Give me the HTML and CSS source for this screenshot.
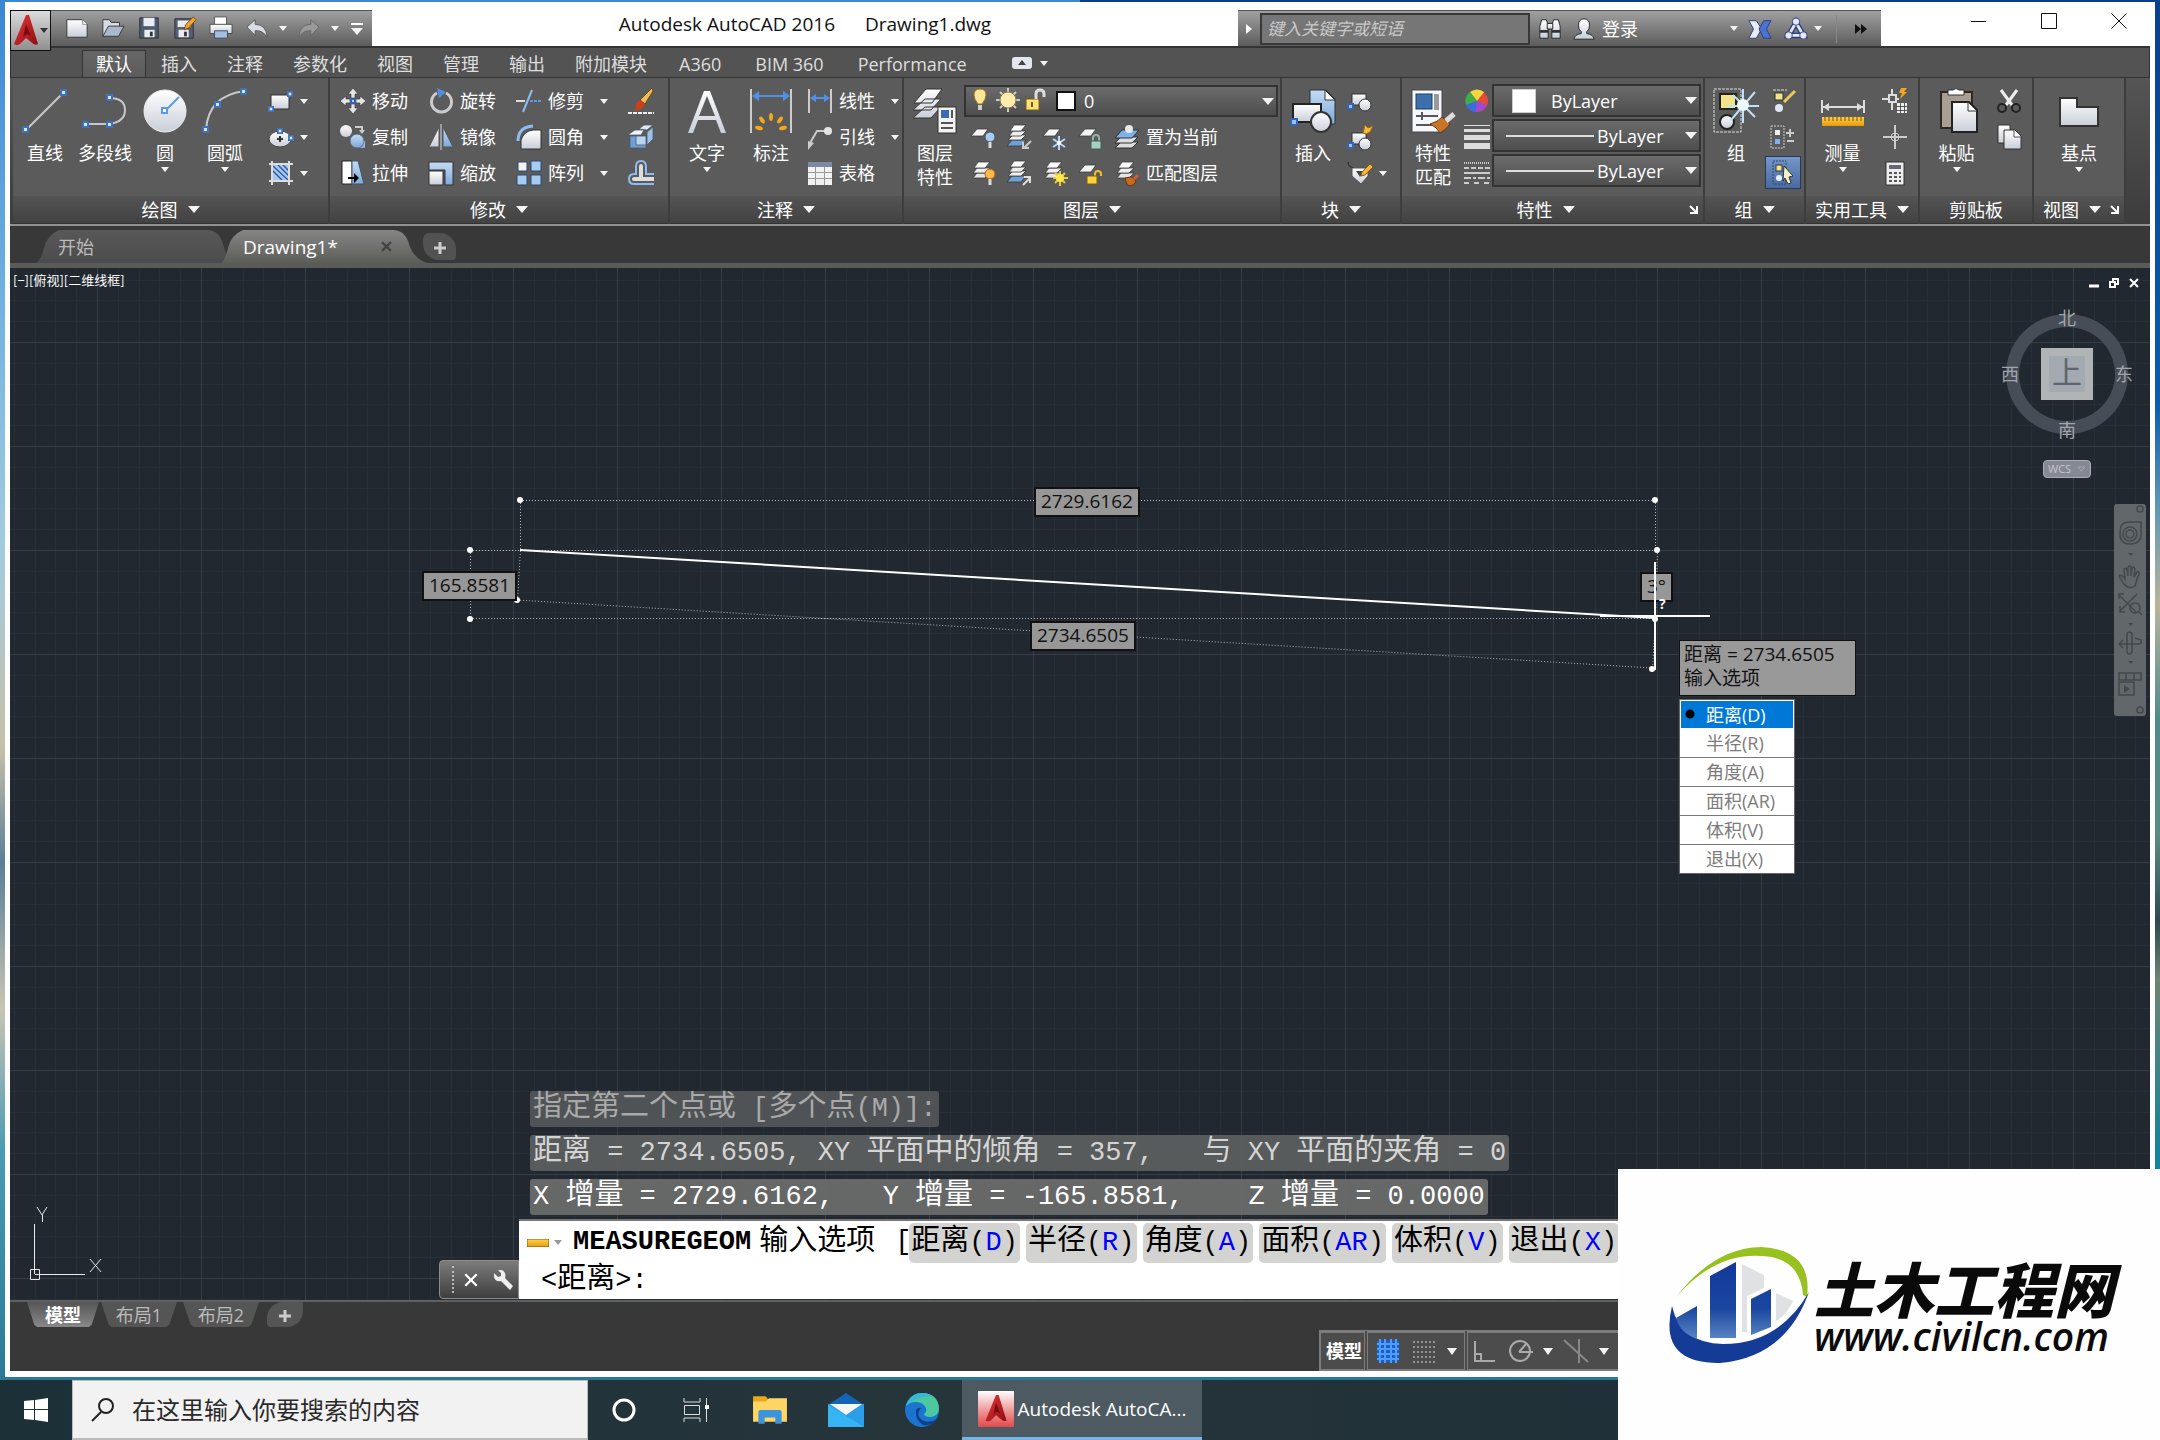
FILE: index.html
```html
<!DOCTYPE html>
<html lang="zh-CN">
<head>
<meta charset="utf-8">
<title>Autodesk AutoCAD 2016 - Drawing1.dwg</title>
<link rel="stylesheet" href="styles.css">
</head>
<body>

<!-- shared gradients and symbols -->
<svg class="defs" aria-hidden="true">
  <defs>
    <linearGradient id="gWhite" x1="0" y1="0" x2="0" y2="1"><stop offset="0" stop-color="#fff"/><stop offset="1" stop-color="#c9ced8"/></linearGradient>
    <linearGradient id="gBlue" x1="0" y1="0" x2="0" y2="1"><stop offset="0" stop-color="#c3dcf5"/><stop offset="1" stop-color="#7ea9d8"/></linearGradient>
    <linearGradient id="gRed" x1="0" y1="0" x2="1" y2="1"><stop offset="0" stop-color="#e8383c"/><stop offset="1" stop-color="#8c0d10"/></linearGradient>
    <linearGradient id="gTower" x1="0" y1="0" x2="0" y2="1"><stop offset="0" stop-color="#12389a"/><stop offset="0.6" stop-color="#1a46a0"/><stop offset="1" stop-color="#5b86c4"/></linearGradient>
    <linearGradient id="gGold" x1="0" y1="0" x2="0" y2="1"><stop offset="0" stop-color="#ffd24a"/><stop offset="1" stop-color="#e79a0c"/></linearGradient>
    <symbol id="stack" viewBox="0 0 26 26">
      <g stroke="#3a3a3a" stroke-width="0.8"><path fill="#e6e6e6" d="M3 18l4-5h13l-5 5z"/><path fill="#eee" d="M3 13l4-5h13l-5 5z"/><path fill="#fff" d="M4 8l4-6h12l-5 6z"/></g>
    </symbol>
    <symbol id="stackBlue" viewBox="0 0 26 26">
      <g stroke="#3a3a3a" stroke-width="0.8"><path fill="#6ea0d8" d="M1 22l5-6h14l-5 6z"/><path fill="#eee" d="M2 16l5-5h13l-5 5z"/><path fill="#eee" d="M3 12l4-5h13l-5 5z"/><path fill="#fff" d="M4 7l4-6h12l-5 6z"/></g>
    </symbol>
    <symbol id="sheet" viewBox="0 0 26 26"><path fill="#f4f4f4" stroke="#3a3a3a" stroke-width="0.8" d="M1 12l6-7h11l-5 7z"/></symbol>
    <symbol id="grip" viewBox="0 0 7 7"><rect x="1" y="1" width="5" height="5" fill="#d6e6f8" stroke="#3f72bd" stroke-width="2"/></symbol>
    <symbol id="logoA" viewBox="0 0 26 32"><path fill="url(#gRed)" d="M13 0L1 29q4 3 8-2l4-4 5 4q4 4 7 2L16 0z"/><path fill="#7d0b0e" d="M13 9l-3 13 4-3 4 2z"/></symbol>
    <symbol id="block" viewBox="0 0 26 26"><rect x="5" y="6" width="14" height="11" fill="url(#gWhite)" stroke="#333"/><circle cx="18" cy="17" r="6" fill="url(#gWhite)" stroke="#333"/><rect x="1" y="16" width="5" height="5" fill="#9cc0ee" stroke="#3465ae" stroke-width="2"/></symbol>
  </defs>
</svg>

<main class="window">
  <header class="titlebar">
    <button class="app-menu" aria-label="应用程序菜单"><svg width="26" height="32"><use href="#logoA"/></svg><i class="arrow dark"></i></button>
    <nav class="qat">
      <button aria-label="新建"><svg viewBox="0 0 26 26"><path fill="url(#gWhite)" stroke="#333" d="M2 4h17l5 5v14H2z"/><path fill="#fff" stroke="#888" d="M19 4v5h5"/></svg></button>
      <button aria-label="打开"><svg viewBox="0 0 26 26"><path fill="#d7dde6" stroke="#333" d="M2 22V4h7l2 3h9v4"/><path fill="#a9b8cc" stroke="#333" d="M2 22l6-11h17l-6 11z"/></svg></button>
      <button aria-label="保存"><svg viewBox="0 0 26 26"><path fill="#4f5b6e" stroke="#2b2f36" d="M3 2h20v22H3z"/><path fill="#e9edf3" d="M7 2h12v9H7z"/><path fill="#e9edf3" d="M8 15h11v8H8z"/><path fill="#333" d="M14 17h3v5h-3z"/></svg></button>
      <button aria-label="另存为"><svg viewBox="0 0 26 26"><path fill="#555f70" stroke="#2b2f36" d="M2 3h20v21H2z"/><path fill="#e9edf3" d="M5 5h14v7H5zM6 15h11v8H6z"/><path fill="#333" d="M12 17h3v5h-3z"/><path fill="#f0a52c" stroke="#7a4a10" d="M12 15l2-6 8-8 3 3-8 9z"/></svg></button>
      <button aria-label="打印"><svg viewBox="0 0 26 26"><path fill="#fff" stroke="#555" d="M6 1h13v9H6z"/><path fill="url(#gWhite)" stroke="#444" d="M1 9h24v10H1z"/><path fill="#9fc0e4" stroke="#445" d="M6 16h14v8H6z"/></svg></button>
      <button aria-label="放弃"><svg viewBox="0 0 26 26"><path fill="#d9dde3" stroke="#555" d="M2 12l9-8v5q12 0 13 14-5-8-13-7v5z"/></svg></button>
      <button class="drop" aria-label="放弃列表"><i class="arrow"></i></button>
      <button aria-label="重做"><svg viewBox="0 0 26 26"><path fill="#9a9a9a" stroke="#666" d="M24 12l-9-8v5Q3 9 2 23q5-8 13-7v5z"/></svg></button>
      <button class="drop" aria-label="重做列表"><i class="arrow"></i></button>
      <button class="drop" aria-label="自定义快速访问工具栏"><i class="bar"></i><i class="arrow lg"></i></button>
    </nav>
    <h1 class="title"><span>Autodesk AutoCAD 2016</span><span>Drawing1.dwg</span></h1>
    <div class="infocenter">
      <button class="expand" aria-label="展开"><i class="arrow right"></i></button>
      <input type="text" class="keyword" placeholder="键入关键字或短语" aria-label="键入关键字或短语">
      <button class="ic" aria-label="搜索"><svg viewBox="0 0 26 26"><g fill="url(#gWhite)" stroke="#222"><path d="M4 3h5l2 6v14H2V10zM22 3h-5l-2 6v14h9V10z"/><path d="M10 7h6v6h-6z"/></g><path fill="#333" d="M2 14h9v3H2zM15 14h9v3h-9z"/></svg></button>
      <button class="login"><svg viewBox="0 0 26 26"><path fill="url(#gWhite)" stroke="#222" d="M13 2q6 0 6 7 0 5-3 7v2q7 1 8 6H2q1-5 8-6v-2q-3-2-3-7 0-7 6-7z"/></svg>登录<i class="arrow"></i></button>
      <button class="ic" aria-label="Exchange"><svg viewBox="0 0 26 26"><path fill="#e8ecf8" stroke="#2c3c80" d="M1 4h8l4 6v6l-4 7H1l5-10z"/><path fill="#4b74d2" stroke="#2c3c80" d="M25 4h-8l-5 9 5 10h8l-5-10z"/></svg></button>
      <button class="ic share" aria-label="Autodesk 360"><svg viewBox="0 0 26 26"><path fill="none" stroke="#2c3c80" stroke-width="6" d="M13 6L5 20h16z"/><path fill="none" stroke="#e4e9f4" stroke-width="3" d="M13 6L5 20h16z"/><g fill="#e4e9f4" stroke="#2c3c80"><circle cx="13" cy="5" r="4"/><circle cx="5" cy="20" r="4"/><circle cx="21" cy="20" r="4"/></g></svg><i class="arrow"></i></button>
      <button class="more" aria-label="更多"><i class="arrow right black"></i><i class="arrow right black"></i></button>
    </div>
    <div class="winctl">
      <button aria-label="最小化"><svg viewBox="0 0 16 16"><path d="M0 8.500h15"/></svg></button>
      <button aria-label="最大化"><svg viewBox="0 0 16 16"><path d="M.5.5h15v15H.5z"/></svg></button>
      <button aria-label="关闭"><svg viewBox="0 0 16 16"><path d="M.5.5l15 15M15.500.5l-15 15"/></svg></button>
    </div>
  </header>

  <nav class="tabs">
    <button class="tab active">默认</button>
    <button class="tab">插入</button>
    <button class="tab">注释</button>
    <button class="tab">参数化</button>
    <button class="tab">视图</button>
    <button class="tab">管理</button>
    <button class="tab">输出</button>
    <button class="tab">附加模块</button>
    <button class="tab addon">A360</button>
    <button class="tab addon">BIM 360</button>
    <button class="tab addon">Performance</button>
    <button class="collapse" aria-label="最小化功能区"><svg width="20" height="12" viewBox="0 0 20 12"><rect width="20" height="12" rx="3" fill="#e4e8ee"/><path fill="#444" d="M6 8l4-5 4 5z"/></svg><i class="arrow"></i></button>
  </nav>

  <section class="ribbon">
    <div class="panel draw">
      <div class="body">
        <button class="big"><svg viewBox="0 0 46 46"><path stroke="#c8c8c8" stroke-width="2" d="M4 42L42 4"/><use href="#grip" x="0" y="38" width="7" height="7"/><use href="#grip" x="38" y="1" width="7" height="7"/></svg>直线</button>
        <button class="big"><svg viewBox="0 0 46 46"><path fill="none" stroke="#c8c8c8" stroke-width="2" d="M3 36h24q16-2 16-14T27 10"/><use href="#grip" x="0" y="33" width="7" height="7"/><use href="#grip" x="24" y="33" width="7" height="7"/><use href="#grip" x="24" y="6" width="7" height="7"/></svg>多段线</button>
        <button class="big"><svg viewBox="0 0 46 46"><circle cx="23" cy="23" r="21" fill="url(#gWhite)" stroke="#eee"/><path stroke="#5a9be6" stroke-width="2" d="M23 23L37 9"/><rect x="20" y="20" width="5" height="5" fill="#fff" stroke="#5a9be6" stroke-width="2"/></svg>圆<i class="arrow"></i></button>
        <button class="big"><svg viewBox="0 0 46 46"><path fill="none" stroke="#c8c8c8" stroke-width="2" d="M4 42Q6 8 42 3"/><use href="#grip" x="0" y="38" width="7" height="7"/><use href="#grip" x="12" y="13" width="7" height="7"/><use href="#grip" x="38" y="0" width="7" height="7"/></svg>圆弧<i class="arrow"></i></button>
        <div class="tools">
          <button class="tool" aria-label="矩形"><svg viewBox="0 0 26 26"><rect x="3" y="7" width="18" height="14" fill="url(#gWhite)" stroke="#333"/><use href="#grip" x="0" y="18" width="6" height="6"/><use href="#grip" x="19" y="3" width="6" height="6"/></svg><i class="arrow"></i></button>
          <button class="tool" aria-label="椭圆"><svg viewBox="0 0 26 26"><ellipse cx="12" cy="15" rx="11" ry="8" fill="url(#gWhite)" stroke="#444"/><path stroke="#333" stroke-width="2" d="M12 12v6M9 15h6"/><use href="#grip" x="9" y="4" width="6" height="6"/><use href="#grip" x="20" y="11" width="6" height="6"/></svg><i class="arrow"></i></button>
          <button class="tool" aria-label="图案填充"><svg viewBox="0 0 26 26"><rect x="4" y="5" width="17" height="16" fill="#a8c8ec"/><path stroke="#2f60ac" stroke-width="1.500" d="M5 6l15 14M10 5l11 11M5 11l10 10M15 5l6 6"/><path stroke="#ddd" stroke-width="2" d="M4 1v24M21 1v24M1 4h24M1 21h24"/></svg><i class="arrow"></i></button>
        </div>
      </div>
      <button class="caption">绘图<i class="arrow lg"></i></button>
    </div>

    <div class="panel modify">
      <div class="body">
        <div class="tools">
          <button class="tool"><svg viewBox="0 0 26 26"><g fill="#e4e4e4" stroke="#333" stroke-width="0.6"><path d="M13 0l5 6h-3v4h-4V6H8zM13 26l-5-6h3v-4h4v4h3zM0 13l6-5v3h4v4H6v3zM26 13l-6-5v3h-4v4h4v3z"/></g><rect x="11" y="11" width="4" height="4" fill="#bcd6f6" stroke="#2f62b2" stroke-width="2"/></svg>移动</button>
          <button class="tool"><svg viewBox="0 0 26 26"><circle cx="6" cy="7" r="6" fill="url(#gWhite)"/><path fill="none" stroke="#ccc" stroke-width="2" d="M15 3h7v4"/><path fill="#ccc" d="M19 6h6l-3 4z"/><path fill="url(#gBlue)" d="M16 17h9v7h-9z"/><circle cx="17" cy="17" r="7" fill="url(#gBlue)" stroke="#567"/></svg>复制</button>
          <button class="tool"><svg viewBox="0 0 26 26"><path fill="#fff" stroke="#222" d="M2 1h10v23H2z"/><path fill="url(#gBlue)" stroke="#456" d="M12 1h6l6 23H12z"/><path fill="none" stroke="#000" stroke-width="2" d="M8 18h8"/><path d="M14 13l5 5-5 5z"/></svg>拉伸</button>
        </div>
        <div class="tools">
          <button class="tool"><svg viewBox="0 0 26 26"><path fill="none" stroke="#ccc" stroke-width="3" d="M9 5a10 10 0 1 0 9 0"/><path fill="#4f8fe2" d="M9 0l9 4-7 6z"/></svg>旋转</button>
          <button class="tool"><svg viewBox="0 0 26 26"><path fill="url(#gWhite)" stroke="#555" d="M11 3v20H1z"/><path fill="url(#gBlue)" stroke="#555" d="M15 3v20h10z"/><path stroke="#ddd" d="M13 0v26"/></svg>镜像</button>
          <button class="tool"><svg viewBox="0 0 26 26"><path fill="url(#gBlue)" stroke="#333" d="M1 2h24v23h-8V10H1z"/><path fill="url(#gWhite)" stroke="#333" d="M1 11h14v14H1z"/></svg>缩放</button>
        </div>
        <div class="tools">
          <button class="tool"><svg viewBox="0 0 26 26"><path stroke="#ddd" stroke-width="2" d="M0 13h9"/><path stroke="#5a9be6" stroke-width="2" stroke-dasharray="3 1" d="M14 13h12"/><path stroke="#8ebcf0" stroke-width="2" d="M7 24L16 2"/></svg>修剪<i class="arrow"></i></button>
          <button class="tool"><svg viewBox="0 0 26 26"><path fill="none" stroke="#8ebcf0" stroke-width="3" d="M2 17Q2 3 17 2"/><path fill="url(#gWhite)" stroke="#333" d="M5 25V16q3-9 12-10h8v19z"/></svg>圆角<i class="arrow"></i></button>
          <button class="tool"><svg viewBox="0 0 26 26"><g stroke="#2d4a70"><path fill="#f2f2f2" d="M2 2h9v9H2z"/><path fill="#a6ccf4" d="M15 1h10v10H15zM1 15h10v10H1zM15 15h10v10H15z"/></g></svg>阵列<i class="arrow"></i></button>
        </div>
        <div class="tools">
          <button class="tool" aria-label="删除"><svg viewBox="0 0 26 26"><path fill="#f0bb55" stroke="#6b4a16" d="M12 12L24 0l1 3-8 13z"/><path fill="#c7421b" d="M12 12l5 4q-2 6-11 7 2-2 2-6 0-3 4-5z"/><path stroke="#eee" stroke-dasharray="4 1" stroke-width="2" d="M0 25h26"/></svg></button>
          <button class="tool" aria-label="分解"><svg viewBox="0 0 26 26"><g stroke="#4a5868" stroke-width="0.800"><path fill="#9cc0e8" d="M19 8l6-5v12l-6 6z"/><path fill="#6d9fd6" d="M2 12h16v12H2z"/><path fill="#b9d4f0" d="M8 12h10v9H8z"/><path fill="#f1f4f8" d="M1 10l6-4h9l-3 5H1z"/><path fill="#dfe9f4" d="M11 5l5-4h9l-6 5z"/></g></svg></button>
          <button class="tool" aria-label="偏移"><svg viewBox="0 0 26 26"><path fill="none" stroke="#8ebcf0" stroke-width="2" d="M26 24H6q-5 0-5-5t5-5h2V7q0-6 5-6t5 6v7h8"/><path fill="none" stroke="#ddd" stroke-width="2" d="M26 20H7q-2 0-2-1t2-1h5V7q0-2 1-2t1 2v11h12"/></svg></button>
        </div>
      </div>
      <button class="caption">修改<i class="arrow lg"></i></button>
    </div>

    <div class="panel annotate">
      <div class="body">
        <button class="big"><svg viewBox="0 0 46 46"><path fill="url(#gWhite)" d="M4 45L20 3h6l16 42h-5l-5-13H14l-5 13zM15 28h16L23 8z"/></svg>文字<i class="arrow"></i></button>
        <button class="big"><svg viewBox="0 0 46 46"><path stroke="#ccc" stroke-width="2" d="M3 1v44M43 1v44"/><path stroke="#4f90e8" stroke-width="2" d="M5 8h36"/><path fill="#4f90e8" d="M4 8l7-5v10zM42 8l-7-5v10z"/><g fill="#f5a71c"><ellipse cx="23" cy="29" rx="2" ry="4"/><ellipse cx="14" cy="32" rx="2" ry="4" transform="rotate(-35 14 32)"/><ellipse cx="32" cy="32" rx="2" ry="4" transform="rotate(35 32 32)"/><ellipse cx="11" cy="40" rx="2" ry="4" transform="rotate(-75 11 40)"/><ellipse cx="35" cy="40" rx="2" ry="4" transform="rotate(75 35 40)"/></g></svg>标注</button>
        <div class="tools">
          <button class="tool"><svg viewBox="0 0 26 26"><path stroke="#ccc" stroke-width="2" d="M2 1v24M24 1v24"/><path stroke="#4f90e8" stroke-width="2" d="M4 10h18"/><path fill="#4f90e8" d="M3 10l6-4v8zM23 10l-6-4v8z"/></svg>线性<i class="arrow"></i></button>
          <button class="tool"><svg viewBox="0 0 26 26"><path fill="none" stroke="#ccc" stroke-width="2" d="M3 19L10 7h8"/><path fill="#ccc" d="M1 26v-9l6 2z"/><circle cx="21" cy="7" r="4" fill="#e4e4e4"/></svg>引线<i class="arrow"></i></button>
          <button class="tool"><svg viewBox="0 0 26 26"><rect x="1" y="2" width="24" height="23" fill="#f2f2f2"/><path fill="#7b8aa0" d="M1 2h24v5H1z"/><path stroke="#999" d="M1 12.500h24M1 18.500h24M8.500 7v18M17.500 7v18"/></svg>表格</button>
        </div>
      </div>
      <button class="caption">注释<i class="arrow lg"></i></button>
    </div>

    <div class="panel layers">
      <div class="body">
        <button class="big"><svg viewBox="0 0 46 46"><g fill="url(#gWhite)" stroke="#333"><path d="M1 30l12-11h16L19 30zM1 22l12-11h16L19 22zM2 15L14 1h16L20 15z"/></g><rect x="26" y="19" width="18" height="26" fill="#f3f3f3" stroke="#333"/><path fill="#3c6db4" d="M29 22h8v8h-8z"/><path stroke="#555" stroke-width="2" d="M29 35h12M29 40h12M40 22v8"/></svg>图层<br>特性</button>
        <div class="layer-side">
          <label class="combo layer-combo">
            <svg viewBox="0 0 86 30" class="layer-state"><path fill="#ffe79a" stroke="#9c7a1c" d="M8 18q-4-5-4-9 0-6 6-6t6 6q0 4-4 9z"/><path fill="#ccc" d="M8 19h4v5H8z"/><g stroke="#ccc" stroke-width="2"><path d="M38 2v24M26 14h24M30 6l16 16M46 6L30 22"/></g><circle cx="38" cy="14" r="8" fill="#ffeab0" stroke="#8c7a40"/><rect x="56" y="13" width="13" height="11" fill="#ffe27a" stroke="#7a5c14"/><path fill="none" stroke="#ddd" stroke-width="3" d="M66 13V8q0-4 4-4t4 4v3"/><path stroke="#7a5c14" stroke-width="2" d="M62 16v5"/></svg>
            <i class="swatch"></i>
            <select aria-label="图层"><option>0</option></select><i class="arrow lg"></i>
          </label>
          <div class="icon-row">
            <button class="tool" aria-label="关"><svg viewBox="0 0 26 26"><use href="#sheet"/><circle cx="20" cy="13" r="5" fill="#a9cdf2" stroke="#456"/><path stroke="#ddd" stroke-width="3" d="M20 18v6"/></svg></button>
            <button class="tool" aria-label="隔离"><svg viewBox="0 0 26 26"><use href="#stackBlue"/><path fill="none" stroke="#ccc" stroke-width="2" d="M25 17l-7 7M17 18v6h6"/></svg></button>
            <button class="tool" aria-label="冻结"><svg viewBox="0 0 26 26"><use href="#sheet"/><g stroke="#b7d8fa" stroke-width="2"><path d="M17 12v14M11 15l12 8M23 15l-12 8"/></g><circle cx="17" cy="19" r="2" fill="#fff"/></svg></button>
            <button class="tool" aria-label="锁定"><svg viewBox="0 0 26 26"><use href="#sheet"/><path fill="none" stroke="#8fb3a8" stroke-width="2" d="M15 17v-3q0-3 3-3t3 3v3"/><rect x="13" y="17" width="10" height="8" fill="#a8cfc2" stroke="#3c5f55"/></svg></button>
            <button class="tool"><svg viewBox="0 0 26 26"><g stroke="#333"><path fill="#ddd" d="M1 24l6-6h17l-6 6z"/><path fill="#ddd" d="M1 19l6-6h17l-6 6z"/><path fill="#7db1ea" d="M1 14l7-8h17l-7 8z"/></g><circle cx="15" cy="5" r="4" fill="#e8e8e8"/></svg>置为当前</button>
          </div>
          <div class="icon-row">
            <button class="tool" aria-label="打开所有图层"><svg viewBox="0 0 26 26"><use href="#stack"/><circle cx="20" cy="14" r="5" fill="#ffb84a" stroke="#a8660e"/><path stroke="#ddd" stroke-width="3" d="M20 19v6"/></svg></button>
            <button class="tool" aria-label="取消隔离"><svg viewBox="0 0 26 26"><use href="#stackBlue"/><path fill="none" stroke="#ddd" stroke-width="2" d="M17 25l7-7M18 17h6v6"/></svg></button>
            <button class="tool" aria-label="解冻所有图层"><svg viewBox="0 0 26 26"><use href="#stack"/><g stroke="#e8c93a" stroke-width="2"><path d="M18 11v15M11 18h15M13 13l10 10M23 13L13 23"/></g><circle cx="18" cy="18" r="4" fill="#ffe94a"/></svg></button>
            <button class="tool" aria-label="解锁"><svg viewBox="0 0 26 26"><use href="#sheet"/><path fill="none" stroke="#f2bd2c" stroke-width="2" d="M17 17v-3q0-3 3-3t3 3v2"/><rect x="9" y="16" width="10" height="8" fill="#ffd23c" stroke="#7a5c14"/></svg></button>
            <button class="tool"><svg viewBox="0 0 26 26"><use href="#stack"/><path fill="#c86a20" stroke="#6b3510" d="M11 18q6-2 9 0l2 4q-3 4-7 4-3-2-4-8z"/><path stroke="#d05a40" stroke-width="3" d="M20 19l4-4"/></svg>匹配图层</button>
          </div>
        </div>
      </div>
      <button class="caption">图层<i class="arrow lg"></i></button>
    </div>

    <div class="panel blocks">
      <div class="body">
        <button class="big"><svg viewBox="0 0 46 46"><path fill="url(#gBlue)" stroke="#333" d="M20 2h16l9 9v25H20z"/><path fill="#fff" stroke="#333" d="M35 2v10h10z"/><rect x="3" y="16" width="28" height="18" fill="url(#gWhite)" stroke="#222" stroke-width="2"/><circle cx="31" cy="34" r="10" fill="url(#gWhite)" stroke="#333" stroke-width="2"/><rect x="1" y="31" width="6" height="6" fill="#9cc0ee" stroke="#3465ae" stroke-width="2"/></svg>插入</button>
        <div class="tools">
          <button class="tool" aria-label="创建块"><svg viewBox="0 0 26 26"><use href="#block"/></svg></button>
          <button class="tool" aria-label="块编辑器"><svg viewBox="0 0 26 26"><use href="#block" y="3"/><path fill="#f6b83c" stroke="#a4660c" d="M16 9l2-8 3 3 5-2-3 6-4 2z"/></svg></button>
          <button class="tool" aria-label="编辑属性"><svg viewBox="0 0 26 26"><path fill="none" stroke="#222" d="M1 2q0 5 6 6"/><path fill="url(#gWhite)" stroke="#555" d="M5 8h16v8l-7 8-9-8z"/><path fill="#444" d="M9 11l4 6 4-6z"/><path fill="#f4b43a" stroke="#8a5a14" d="M15 12l8-8 3 3-8 8-4 1z"/></svg><i class="arrow"></i></button>
        </div>
      </div>
      <button class="caption">块<i class="arrow lg"></i></button>
    </div>

    <div class="panel props">
      <div class="body">
        <button class="big"><svg viewBox="0 0 46 46"><rect x="2" y="2" width="30" height="42" fill="#f6f8fb" stroke="#445"/><rect x="6" y="6" width="16" height="15" fill="#3c70ac" stroke="#1c3c70"/><path fill="#999" d="M24 6h5v16h-5z"/><path stroke="#556" stroke-width="2" d="M6 28h22M12 24v8M6 37h16"/><path fill="#c87528" stroke="#6b3510" d="M20 36q8-2 12-7l8 7q-4 6-10 9-3-6-10-9z"/><path stroke="#ddd" stroke-width="5" d="M36 33l8-7"/></svg>特性<br>匹配</button>
        <div class="tools">
          <span class="tool"><svg viewBox="0 0 26 26"><circle cx="13" cy="13" r="11" fill="#e24a3a"/><path fill="#f2d83c" d="M13 13L6 4a11 11 0 0 1 14 0z"/><path fill="#3cae4c" d="M13 13L6 4a11 11 0 0 0-4 13z"/><path fill="#3c6ae0" d="M13 13L2 17a11 11 0 0 0 10 7z"/><path fill="#a04ad0" d="M13 13l-1 11a11 11 0 0 0 11-7z"/></svg></span>
          <span class="tool"><svg viewBox="0 0 26 26"><path fill="#ddd" d="M0 1h26v1H0zM0 5h26v3H0zM0 11h26v5H0zM0 19h26v6H0z"/></svg></span>
          <span class="tool"><svg viewBox="0 0 26 26"><g stroke="#ccc" stroke-width="2"><path stroke-dasharray="1 1" d="M0 3h26"/><path stroke-dasharray="5 2" d="M0 8h26"/><path d="M0 13h26"/><path stroke-dasharray="7 2 3 2" d="M0 18h26"/><path stroke-dasharray="5 5" d="M0 23h26"/></g></svg></span>
        </div>
        <div class="combos">
          <label class="combo"><i class="swatch"></i><select aria-label="对象颜色"><option>ByLayer</option></select><i class="arrow lg"></i></label>
          <label class="combo"><i class="sample"></i><select aria-label="线宽"><option>ByLayer</option></select><i class="arrow lg"></i></label>
          <label class="combo"><i class="sample"></i><select aria-label="线型"><option>ByLayer</option></select><i class="arrow lg"></i></label>
        </div>
      </div>
      <button class="caption launcher">特性<i class="arrow lg"></i><svg class="launch" viewBox="0 0 9 9"><path d="M1 1l7 7M8 1v7H1"/></svg></button>
    </div>

    <div class="panel groups">
      <div class="body">
        <button class="big"><svg viewBox="0 0 46 46"><path fill="none" stroke="#ddd" stroke-dasharray="3 1" d="M1 1h27v43H1z"/><rect x="7" y="6" width="16" height="15" fill="#f3e48a" stroke="#222" stroke-width="2"/><circle cx="14" cy="34" r="7" fill="url(#gWhite)" stroke="#222" stroke-width="2"/><g stroke="#bfe2fb" stroke-width="2"><path d="M30 1v34M14 18h32M20 7l22 22M42 4L18 32"/></g><circle cx="30" cy="17" r="6" fill="#eef8ff"/></svg>组</button>
        <div class="tools">
          <button class="tool" aria-label="解除编组"><svg viewBox="0 0 26 26"><path stroke="#ddd" stroke-dasharray="3 1" d="M3 2h14"/><rect x="5" y="5" width="8" height="7" fill="#f3e48a" stroke="#333"/><circle cx="9" cy="20" r="4" fill="#dfe8f2"/><path stroke="#e8cb5c" stroke-width="3" d="M14 14l11-11"/></svg></button>
          <button class="tool" aria-label="组编辑"><svg viewBox="0 0 26 26"><path fill="none" stroke="#ccc" stroke-dasharray="2 1" d="M1 2h13v22H1z"/><rect x="5" y="6" width="5" height="5" fill="#eee"/><rect x="5" y="15" width="5" height="5" fill="#7eb2ec"/><path stroke="#ccc" stroke-width="2" d="M16 9h8M20 5v8M17 17h7"/></svg></button>
          <button class="tool selected" aria-label="启用/禁用组选择"><svg viewBox="0 0 26 26"><path fill="none" stroke="#2a4570" stroke-dasharray="2 1" d="M3 1h13v23H3z"/><rect x="6" y="5" width="6" height="6" fill="#f3e48a" stroke="#333"/><circle cx="9" cy="18" r="3" fill="#e6f0fa"/><path fill="#f6f2c8" stroke="#333" d="M14 6l9 10-4 1 2 6-3 1-3-6-2 3z"/></svg></button>
        </div>
      </div>
      <button class="caption">组<i class="arrow lg"></i></button>
    </div>

    <div class="panel utils">
      <div class="body">
        <button class="big"><svg viewBox="0 0 46 46"><path stroke="#ddd" stroke-width="2" d="M2 12v13M44 12v13M3 19h40"/><path fill="#ddd" d="M3 19l6-4v8zM43 19l-6-4v8z"/><rect x="2" y="29" width="42" height="9" fill="url(#gGold)"/><path stroke="#7a4c04" d="M5 29v4M9 29v4M13 29v4M17 29v4M21 29v4M25 29v4M29 29v4M33 29v4M37 29v4M41 29v4"/></svg>测量<i class="arrow"></i></button>
        <div class="tools">
          <button class="tool" aria-label="快速选择"><svg viewBox="0 0 26 26"><path fill="none" stroke="#ddd" stroke-width="2" d="M0 11h7M10 1v6M7 7h7v7H7zM14 11h3M10 14v8"/><path fill="#f5a71c" d="M19 0h6l-3 4h3l-7 7 2-6h-3z"/><rect x="15" y="15" width="10" height="10" fill="#eee"/><path stroke="#555" d="M18.500 15v10M22.500 15v10M15 18.500h10M15 22.500h10"/></svg></button>
          <button class="tool" aria-label="点坐标"><svg viewBox="0 0 26 26"><path stroke="#ccc" stroke-width="2" d="M13 1v24M1 13h24"/><circle cx="13" cy="13" r="4" fill="none" stroke="#ccc"/></svg></button>
          <button class="tool" aria-label="计算器"><svg viewBox="0 0 26 26"><rect x="4" y="2" width="18" height="23" fill="#eee" stroke="#333"/><path fill="#667" d="M7 5h12v4H7z"/><g fill="#555"><path d="M7 12h3v2H7zM12 12h3v2h-3zM17 12h2v2h-2zM7 16h3v2H7zM12 16h3v2h-3zM17 16h2v2h-2zM7 20h3v2H7zM12 20h3v2h-3zM17 20h2v2h-2z"/></g></svg></button>
        </div>
      </div>
      <button class="caption">实用工具<i class="arrow lg"></i></button>
    </div>

    <div class="panel clip">
      <div class="body">
        <button class="big"><svg viewBox="0 0 46 46"><rect x="7" y="4" width="31" height="36" fill="#a89e92" stroke="#2c2824" stroke-width="2"/><path fill="#fff" stroke="#333" d="M14 2h5q3-3 6 0h5v5H14z"/><path fill="url(#gWhite)" stroke="#222" stroke-width="2" d="M18 14h17l8 8v22H18z"/><path fill="#fff" stroke="#333" d="M34 14v9h9z"/></svg>粘贴<i class="arrow"></i></button>
        <div class="tools">
          <button class="tool" aria-label="剪切"><svg viewBox="0 0 26 26"><path stroke="#eee" stroke-width="3" d="M5 2l11 15M21 2L10 17"/><g fill="none" stroke="#222" stroke-width="2"><circle cx="6" cy="20" r="4"/><circle cx="20" cy="20" r="4"/></g></svg></button>
          <button class="tool" aria-label="复制剪裁"><svg viewBox="0 0 26 26"><path fill="url(#gWhite)" stroke="#333" d="M2 1h12v18H2z"/><path fill="url(#gWhite)" stroke="#333" d="M8 6h11l6 6v13H8z"/><path fill="#fff" stroke="#555" d="M18 6v7h7"/></svg></button>
        </div>
      </div>
      <button class="caption">剪贴板</button>
    </div>

    <div class="panel view">
      <div class="body">
        <button class="big"><svg viewBox="0 0 46 46"><path fill="url(#gWhite)" stroke="#333" stroke-width="2" d="M4 10h17v9h21v19H4z"/></svg>基点<i class="arrow"></i></button>
      </div>
      <button class="caption launcher">视图<i class="arrow lg"></i><svg class="launch" viewBox="0 0 9 9"><path d="M1 1l7 7M8 1v7H1"/></svg></button>
    </div>
  </section>

  <nav class="doc-tabs">
    <button class="doc-tab start">开始</button>
    <button class="doc-tab current">Drawing1*<svg viewBox="0 0 10 10"><path d="M1 1l8 8M9 1L1 9"/></svg></button>
    <button class="doc-add" aria-label="新图形"><svg viewBox="0 0 12 12"><path d="M6 0v12M0 6h12"/></svg></button>
  </nav>

  <section class="canvas">
    <svg class="drawing">
      <defs>
        <pattern id="grid" width="104" height="104" patternUnits="userSpaceOnUse" x="87" y="74">
          <path stroke="#262e38" d="M21.500 0v104M42.500 0v104M62.500 0v104M83.500 0v104M0 21.500h104M0 42.500h104M0 62.500h104M0 83.500h104"/>
          <path stroke="#353d47" d="M.5 0v104M0 .5h104"/>
        </pattern>
      </defs>
      <rect width="100%" height="100%" fill="url(#grid)"/>
      <!-- dimension guides -->
      <g stroke="#b4b8bc" stroke-dasharray="1 2" fill="none">
        <path d="M510 232.500h1135M460 282.500h1187M460 350.500h1185M507 332l1135 68"/>
        <path d="M510.500 232v50l-3 50M460.500 282v69M1645.500 232v50M1647.500 282l-2 69-3 50"/>
      </g>
      <path stroke="#fff" stroke-width="2" d="M510 282l1135 68"/>
      <g fill="#fff"><circle cx="510" cy="232" r="3"/><circle cx="1645" cy="232" r="3"/><circle cx="460" cy="282" r="3"/><circle cx="1647" cy="282" r="3"/><circle cx="460" cy="351" r="3"/><circle cx="1645" cy="351" r="3"/><circle cx="507" cy="332" r="3"/><circle cx="1642" cy="401" r="3"/></g>
      <!-- UCS icon -->
      <path fill="none" stroke="#e8e8e8" d="M24.500 1006v-50M25 1006.500h50M20.500 1001.500h9v10h-9zM27 939l5 8 5-8M32.500 947v7M80 991l11 13M91 991l-11 13"/>
    </svg>
    <span class="view-label">[−][俯视][二维线框]</span>
    <div class="doc-ctl">
      <button aria-label="最小化图形"><svg viewBox="0 0 10 10"><path d="M0 8h10" stroke-width="3"/></svg></button>
      <button aria-label="还原图形"><svg viewBox="0 0 10 10"><path d="M1 4h5v5H1zM4 3V1h5v5H7" stroke-width="2"/></svg></button>
      <button aria-label="关闭图形"><svg viewBox="0 0 10 10"><path d="M1 1l8 8M9 1L1 9" stroke-width="2"/></svg></button>
    </div>
    <div class="cube">
      <i class="ring"></i>
      <span class="n">北</span><span class="w">西</span><span class="face">上</span><span class="e">东</span><span class="s">南</span>
    </div>
    <button class="wcs">WCS<svg viewBox="0 0 9 8"><path d="M1 2h7L4 6z"/></svg></button>
    <div class="navbar">
      <svg viewBox="0 0 32 212"><g fill="none" stroke="#43484b" stroke-width="1.500"><circle cx="26" cy="5" r="3"/><path d="M7 22q2-4 9-4h11v12q0 10-11 10-10 0-10-10 0-5 1-8z"/><circle cx="16" cy="30" r="7"/><circle cx="16" cy="30" r="4"/><path d="M10 80q-6-8-4-9 2 0 5 4l-1-10q2-2 3 1l1 6V63q2-2 3 0v9l1-8q2-2 3 1l-1 8 3-5q3-1 2 2-2 5-4 12-6 4-11-2z"/><path d="M5 91l17 17M23 90L6 107M5 95v-5h5M6 102v6h5"/><circle cx="21" cy="104" r="5"/><path d="M25 108l3 3M5 140h20q3 0 2-4l-6-2M5 140l4-4M5 140l4 4"/><rect x="13" y="128" width="5" height="22" rx="3"/><path d="M5 169h22v7H5zM12 169v7M20 169v7M5 178h15v13H5z"/><circle cx="26" cy="206" r="3"/></g><g fill="#43484b"><path d="M14 49h5l-2 3zM14 119h5l-2 3zM14 157h5l-2 3zM10 181l6 4-6 4z"/></g></svg>
    </div>

    <span class="dim d-width">2729.6162</span>
    <span class="dim d-height">165.8581</span>
    <span class="dim d-length">2734.6505</span>
    <span class="dim d-angle">3°</span>
    <svg class="cross" viewBox="0 0 110 110"><path stroke="#fff" stroke-width="2" d="M55 0v108M0 54h110"/></svg>
    <b class="query">?</b>

    <div class="prompt">距离 = 2734.6505<br>输入选项</div>
    <div class="options">
      <button class="option picked">距离(D)</button>
      <button class="option">半径(R)</button>
      <button class="option">角度(A)</button>
      <button class="option">面积(AR)</button>
      <button class="option">体积(V)</button>
      <button class="option">退出(X)</button>
    </div>

    <div class="command">
      <div class="history">
        <p class="old"><span>指定第二个点或</span> [<span>多个点</span>(M)]:</p>
        <p class="mid"><span>距离</span> = 2734.6505, XY <span>平面中的倾角</span> = 357,   <span>与</span> XY <span>平面的夹角</span> = 0</p>
        <p>X <span>增量</span> = 2729.6162,   Y <span>增量</span> = -165.8581,    Z <span>增量</span> = 0.0000</p>
      </div>
      <div class="command-row">
        <div class="handle">
          <i class="dots"></i>
          <button aria-label="关闭命令行"><svg viewBox="0 0 14 14"><path d="M2 2l10 10M12 2L2 12" stroke="#fff" stroke-width="2"/></svg></button>
          <button aria-label="自定义"><svg viewBox="0 0 20 20"><path fill="#eee" d="M1 3l4 4 3-1V3L5 0q5-1 7 3 1 3 0 5l8 8-3 4-9-9Q2 12 1 7z"/></svg></button>
        </div>
        <div class="command-box">
          <div class="line"><svg class="ruler" viewBox="0 0 22 8"><rect width="22" height="8" rx="1" fill="url(#gGold)" stroke="#8a5a08"/></svg><i class="arrow gray"></i><b>MEASUREGEOM</b><span class="ask">输入选项</span><span class="open">[</span><button><span>距离</span>(<em>D</em>)</button><button><span>半径</span>(<em>R</em>)</button><button><span>角度</span>(<em>A</em>)</button><button><span>面积</span>(<em>AR</em>)</button><button><span>体积</span>(<em>V</em>)</button><button><span>退出</span>(<em>X</em>)</button></div>
          <div class="line second">&lt;<span>距离</span>&gt;:</div>
        </div>
      </div>
    </div>
  </section>

  <footer class="status">
    <nav class="layouts">
      <button class="layout active">模型</button>
      <button class="layout">布局1</button>
      <button class="layout">布局2</button>
      <button class="layout add" aria-label="新建布局"><svg viewBox="0 0 12 12"><path d="M6 0v12M0 6h12"/></svg></button>
    </nav>
    <div class="toggles">
      <button class="cell space">模型</button>
      <div class="cell">
        <button aria-label="栅格"><svg viewBox="0 0 26 26"><rect x="2" y="2" width="22" height="22" rx="3" fill="#1d5fc0"/><path stroke="#4f9cff" stroke-width="2" d="M5 1v24M10 1v24M16 1v24M21 1v24M2 6h22M2 11h22M2 16h22M2 21h22"/></svg></button>
        <button aria-label="捕捉"><svg viewBox="0 0 26 26"><path stroke="#aaa" stroke-width="1.500" stroke-dasharray="2 2" d="M2 4h22M2 9h22M2 14h22M2 19h22M2 24h22"/></svg></button>
        <i class="arrow lg tall"></i>
      </div>
      <div class="cell rest">
        <button aria-label="正交"><svg viewBox="0 0 26 26"><path fill="none" stroke="#aaa" stroke-width="2" d="M4 3v20h20M4 16h6v7"/></svg></button>
        <button aria-label="极轴"><svg viewBox="0 0 26 26"><g fill="none" stroke="#aaa" stroke-width="2"><circle cx="13" cy="13" r="10"/><path d="M12 14l8-9M12 14h14"/></g></svg></button>
        <i class="arrow lg tall"></i>
        <button aria-label="等轴测"><svg viewBox="0 0 26 26"><path stroke="#888" stroke-width="2" d="M1 2l24 22M16 1v24"/></svg></button>
        <i class="arrow lg tall"></i>
      </div>
    </div>
  </footer>
</main>

<nav class="taskbar">
  <button class="win" aria-label="开始"><svg viewBox="0 0 24 24"><path fill="#fff" d="M0 3l10-1v9H0zM11 2l13-2v11H11zM0 12h10v10L0 21zM11 12h13v12l-13-2z"/></svg></button>
  <label class="search"><svg viewBox="0 0 26 26"><g fill="none" stroke="#222" stroke-width="2"><circle cx="16" cy="9" r="7"/><path d="M11 15L2 24"/></g></svg><input type="text" placeholder="在这里输入你要搜索的内容" aria-label="搜索"></label>
  <button class="task" aria-label="Cortana"><svg viewBox="0 0 26 26"><circle cx="13" cy="13" r="10" fill="none" stroke="#fff" stroke-width="3"/></svg></button>
  <button class="task" aria-label="任务视图"><svg viewBox="0 0 26 26"><path fill="none" stroke="#ddd" d="M1 1v4h16V1M1 25v-4h16v4M1.500 8.500h15v9h-15zM23.500 1v24"/><path fill="#fff" d="M22 8h4v4h-4z"/></svg></button>
  <button class="task large" aria-label="文件资源管理器"><svg viewBox="0 0 34 34"><path fill="#e9a91c" d="M1 4h12l3 4v6H1z"/><path fill="#ffd665" d="M1 9h12l3-3h17v22H1z"/><path fill="#3c94dc" d="M6 30V19q0-2 2-2h18q2 0 2 2v11h-6v-6H12v6z"/></svg></button>
  <button class="task large" aria-label="邮件"><svg viewBox="0 0 36 34"><path fill="#1464b8" d="M0 12L18 0l18 12z"/><path fill="#2a9fe8" d="M0 11h36v23H0z"/><path fill="#37b4f4" d="M0 34V12l36 22z"/><path fill="#f4f6f8" d="M2 11h32L18 22z"/></svg></button>
  <button class="task large" aria-label="Edge"><svg viewBox="0 0 36 36"><circle cx="18" cy="18" r="17" fill="#1b74d0"/><path fill="#4cc8a0" d="M2 14Q6 1 19 1q15 1 16 15 0 8-8 9-7 0-7-3 3-2 2-6-3-6-10-6-7 0-10 4z"/><path fill="#35b8dc" d="M2 14Q6 1 19 1q6 0 10 4-14-3-27 9z"/><path fill="#123f86" d="M12 19q-1 9 7 14 8 2 14-6-9 5-15 1-5-3-3-9 1-3 3-3-5-1-6 3z"/></svg></button>
  <button class="running"><span class="badge"><svg width="24" height="28"><use href="#logoA"/></svg></span>Autodesk AutoCA...</button>
</nav>

<aside class="brand">
  <svg viewBox="0 0 160 130">
    <path fill="#96c11f" d="M13 54Q50 6 97 5q52 3 46 50l-4-2Q136 16 99 14 52 10 13 54z"/>
    <path fill="#143c96" d="M8 64Q-6 122 56 121q66-6 89-71-30 52-86 52Q16 101 8 64z"/>
    <g fill="url(#gTower)"><path d="M46 34l26-14v76H46zM12 76l21-12v33q-17-6-21-21zM87 57l20-10v38l-20 8z"/></g>
    <path fill="#dfe1e5" d="M78 22l22 11v13l-17 8v36h-5zM112 51l17 8q-6 14-17 20z"/>
  </svg>
  <div class="brand-text"><strong>土木工程网</strong><a href="#">www.civilcn.com</a></div>
</aside>
</body>
</html>
```
FILE: styles.css
```css
* { box-sizing: border-box; }
body {
  margin: 0;
  height: 100vh;
  overflow: hidden;
  display: flex;
  flex-direction: column;
  font-family: "Open Sans", "Noto Sans CJK SC", sans-serif;
  font-size: 18px;
  line-height: 24px;
  color: #fff;
  background:
    linear-gradient(#3a86d4, #6fb0e0 20%, #a3cbe0 38%, #c6bfa8 52%, #5a7f98 60%, #c9c4b4 70%, #4a9ab4 80%, #2a7896 96%) left / 50% 100% no-repeat,
    linear-gradient(#083f8c, #0a5cb0 28%, #5d96b4 35%, #b8b49a 42%, #4f8a8c 50%, #5a8c80 58%, #2c4a50 64%, #6c8472 68%, #14849c 80%, #2a7896) right / 50% 100% no-repeat;
}
.defs { position: absolute; width: 0; height: 0; }
button, input, select { font: inherit; color: inherit; border: 0; padding: 0; margin: 0; background: none; white-space: nowrap; }
p { margin: 0; }

.arrow {
  flex: none;
  width: 0;
  border: 4px solid transparent;
  border-top: 5px solid #f4f4f4;
  border-bottom: 0;
}
.arrow.lg { border-width: 7px 6px 0; }
.arrow.tall { border-width: 7px 5px 0; }
.arrow.dark { border-top-color: #333; }
.arrow.gray { border-top-color: #999; }
.arrow.right { border: 5px solid transparent; border-left: 6px solid #fff; border-right: 0; }
.arrow.black { border-left-color: #111; }

/* window frame */
.window {
  flex: 1;
  min-height: 0;
  margin: 2px 5px 3px;
  padding: 8px 5px 6px;
  background: #fff;
  display: flex;
  flex-direction: column;
}

.titlebar { display: flex; height: 36px; position: relative; z-index: 1; }
.app-menu {
  width: 41px;
  height: 41px;
  border: 1px solid #111;
  background: linear-gradient(#dcdcdc, #8f8f8f);
  display: flex;
  align-items: center;
  justify-content: center;
  gap: 1px;
}
.qat {
  width: 321px;
  padding-left: 8px;
  display: flex;
  align-items: center;
  background: linear-gradient(#a0a0a0, #5c5c5c);
  border-top: 1px solid #555;
}
.qat button { width: 37px; height: 26px; }
.qat svg { width: 24px; height: 24px; }
.qat .drop { width: 16px; display: flex; flex-direction: column; align-items: center; justify-content: center; }
.qat .drop:last-child { width: 30px; }
.bar { width: 12px; height: 2px; margin-bottom: 3px; background: #fff; }
.title {
  flex: 1;
  margin: 0;
  padding-bottom: 8px;
  display: flex;
  align-items: center;
  justify-content: center;
  gap: 30px;
  font-size: 19px;
  font-weight: 400;
  color: #111;
}
.infocenter {
  width: 643px;
  display: flex;
  align-items: center;
  background: linear-gradient(#a0a0a0, #5c5c5c);
  border-top: 1px solid #555;
}
.expand { width: 22px; display: flex; justify-content: center; }
.keyword {
  width: 270px;
  height: 32px;
  padding: 0 5px;
  border: 2px solid #383838;
  background: #767676;
  font-size: 17px;
  font-style: italic;
}
.keyword::placeholder { color: #c8c8c8; opacity: 1; }
.infocenter svg { width: 24px; height: 24px; }
.ic { width: 40px; display: flex; align-items: center; justify-content: center; gap: 6px; }
.ic.share { width: 46px; }
.login { width: 170px; padding-left: 2px; display: flex; align-items: center; gap: 6px; }
.login .arrow { margin: 0 2px 0 auto; }
.more { flex: 1; margin-left: 10px; padding-left: 4px; display: flex; align-items: center; justify-content: center; border-left: 1px solid #888; height: 28px; }
.winctl { width: 269px; display: flex; gap: 8px; justify-content: flex-end; padding-bottom: 14px; }
.winctl button { width: 62px; }
.winctl svg { width: 16px; height: 16px; fill: none; stroke: #111; display: block; margin: 0 auto; }

/* ribbon tabs */
.tabs {
  height: 32px;
  padding-left: 71px;
  display: flex;
  align-items: flex-end;
  background: #535353;
  border: 2px solid #333;
  border-width: 2px 1px 1px;
  color: #dedede;
}
.tab { height: 27px; padding: 0 15px; line-height: 24px; }
.tab.active { padding: 0 13px; border: 1px solid #333; border-bottom: 0; background: linear-gradient(#666, #5c5c5c); color: #fff; }
.tab.addon { padding: 0 17px; }
.collapse { display: flex; align-items: center; gap: 8px; height: 28px; margin-left: 28px; }

/* ribbon */
.ribbon { display: flex; height: 148px; padding-left: 3px; background: linear-gradient(#555, #3c3c3c); border-bottom: 2px solid #919191; }
.panel { display: flex; flex-direction: column; border-right: 2px solid #3d3d3d; background: #5b5b5b; }
.draw { width: 317px; }
.modify { width: 340px; }
.annotate { width: 234px; }
.layers { width: 378px; }
.blocks { width: 120px; }
.props { width: 303px; }
.groups { width: 101px; }
.utils { width: 114px; }
.clip { width: 114px; }
.view { width: 92px; }
.body { flex: 1; display: flex; padding: 5px 2px 0; }
.modify .body { padding-left: 10px; gap: 20px; }
.caption {
  height: 28px;
  border-bottom: 1px solid #333;
  display: flex;
  align-items: center;
  justify-content: center;
  gap: 10px;
  background: linear-gradient(#545454, #424242);
  position: relative;
}
.caption.launcher { padding-right: 14px; }
.launch { position: absolute; right: 5px; width: 9px; height: 9px; fill: none; stroke: #fff; stroke-width: 2; }
.big { width: 60px; padding-top: 5px; line-height: 24px; display: flex; flex-direction: column; align-items: center; }
.big svg { width: 46px; height: 46px; margin-bottom: 7px; flex: none; }
.big .arrow { margin-top: 2px; }
.annotate .big { width: 64px; }
.annotate .body { padding-left: 5px; }
.annotate .tools { margin-left: 4px; }
.layers .big, .blocks .big, .props .big, .groups .big { width: 58px; }
.utils .big, .clip .big { width: 69px; }
.view .big { width: 88px; }
.tools { display: flex; flex-direction: column; align-items: flex-start; }
.draw .tools { margin-left: 13px; }
.blocks .tools, .utils .tools, .clip .tools { margin-left: 5px; }
.props .tools { margin-left: 2px; }
.tool { height: 36px; display: flex; align-items: center; gap: 6px; }
.tool svg { width: 26px; height: 26px; flex: none; }
.modify .tool .arrow, .annotate .tool .arrow { margin-left: 10px; }
.tool.selected { width: 36px; height: 33px; margin-top: 1px; justify-content: center; border: 1px solid #24385c; background: linear-gradient(#7596c8, #4a6aa0); }
.groups .tools { align-items: center; }
.combo {
  height: 33px;
  display: flex;
  align-items: center;
  padding-right: 2px;
  border: 2px solid #333;
  background: linear-gradient(#6b6b6b, #4e4e4e);
}
.combo select { flex: 1; min-width: 0; appearance: none; }
.swatch { width: 24px; height: 24px; background: #fff; border: 1px solid #ccc; }
.layer-side { flex: 1; }
.layer-combo { height: 32px; margin: 2px 0; }
.layer-combo .swatch { width: 20px; height: 20px; border: 2px solid #111; margin-right: 8px; }
.layer-state { width: 86px; height: 30px; margin-left: 4px; }
.icon-row { display: flex; gap: 10px; padding-left: 6px; }
.combos { flex: 1; margin-left: 2px; display: flex; flex-direction: column; gap: 2px; padding-top: 1px; }
.combos .swatch { margin: 0 15px 0 18px; }
.sample { width: 88px; height: 2px; margin: 0 3px 0 12px; background: #ddd; }

/* document tabs */
.doc-tabs { height: 42px; display: flex; align-items: flex-end; padding-left: 25px; background: #383838; border-bottom: 5px solid #5a5a56; }
.doc-tab { height: 33px; text-align: left; }
.start { width: 196px; padding-left: 23px; color: #bbb; background: linear-gradient(#585858, #4c4c4c); clip-path: path("M0 33Q6 31 9 18T24 0H172Q184 0 188 14T196 33Z"); }
.current {
  width: 206px;
  margin-left: -10px;
  padding: 0 35px 0 22px;
  display: flex;
  align-items: center;
  justify-content: space-between;
  background: linear-gradient(#868686, #5c5c58);
  font-size: 19px;
  clip-path: path("M0 33Q4 31 7 18T22 0H172Q184 0 188 14T206 33Z");
}
.current svg { width: 11px; height: 11px; stroke: #444; stroke-width: 2; }
.doc-add { width: 33px; height: 27px; margin: 0 0 3px -4px; border-radius: 6px 16px 4px 16px; background: #525252; }
.doc-add svg, .layout svg { width: 12px; height: 12px; stroke: #ccc; stroke-width: 3; }

/* drawing area */
.canvas { flex: 1; min-height: 0; position: relative; overflow: hidden; background: #212830; }
.drawing { position: absolute; width: 100%; height: 100%; }
.view-label { position: absolute; left: 3px; top: 3px; font-family: "Noto Sans CJK SC", sans-serif; font-size: 13px; line-height: 18px; }
.doc-ctl { position: absolute; right: 11px; top: 10px; display: flex; gap: 10px; }
.doc-ctl button { width: 10px; height: 10px; }
.doc-ctl svg { width: 10px; height: 10px; display: block; fill: none; stroke: #fff; }
.cube {
  position: absolute;
  right: 17px;
  top: 38px;
  width: 132px;
  height: 136px;
  display: grid;
  grid-template-columns: 1fr 52px 1fr;
  grid-template-rows: 1fr 52px 1fr;
  place-items: center;
  color: #a2a6aa;
}
.ring { position: absolute; left: 5px; top: 8px; width: 122px; height: 120px; border: 13px solid #464d57; border-radius: 50%; }
.cube span { position: relative; }
.n { grid-area: 1 / 2; align-self: start; }
.w { grid-area: 2 / 1; justify-self: start; }
.face { grid-area: 2 / 2; width: 52px; height: 52px; border: 8px solid #b0b4b4; background: #a2a9b0; color: #5c646c; font-size: 30px; line-height: 32px; text-align: center; }
.e { grid-area: 2 / 3; justify-self: end; }
.s { grid-area: 3 / 2; align-self: end; }
.wcs { position: absolute; right: 59px; top: 192px; width: 48px; height: 18px; padding-left: 4px; border: 1px solid #a9acb6; border-radius: 4px; background: #858994; color: #c4c6cc; font-size: 11px; line-height: 14px; text-align: left; }
.wcs svg { width: 9px; height: 8px; margin-left: 6px; fill: none; stroke: #a6a9b2; }
.navbar { position: absolute; right: 4px; top: 236px; width: 32px; height: 212px; border-radius: 3px; background: #61676a; }
.navbar svg { display: block; }
.dim { position: absolute; height: 30px; padding: 0 5px; border: 2px solid #111; background: #979797; color: #111; font-size: 19px; line-height: 24px; }
.d-width { left: 1024px; top: 219px; }
.d-height { left: 412px; top: 303px; }
.d-length { left: 1020px; top: 353px; }
.d-angle { left: 1630px; top: 304px; }
.cross { position: absolute; left: 1590px; top: 294px; width: 110px; height: 110px; }
.query { position: absolute; left: 1649px; top: 328px; font-size: 14px; line-height: 16px; }
.prompt { position: absolute; left: 1669px; top: 372px; width: 177px; height: 56px; padding: 1px 4px; border: 1px solid #111; background: #999; color: #111; font-size: 19px; }
.options { position: absolute; left: 1669px; top: 431px; width: 116px; display: flex; flex-direction: column; border: 1px solid #666; background: #fff; }
.option { height: 29px; padding-left: 26px; line-height: 26px; text-align: left; color: #7c7c7c; border-bottom: 1px solid #777; }
.option:last-child { height: 28px; border-bottom: 0; }
.picked { background: radial-gradient(circle at 9px 13px, #000 4px, #0078d7 5px); color: #fff; border: 1px solid #fff; padding-left: 25px; line-height: 24px; }

/* command line */
.command { position: absolute; left: 429px; right: 0; bottom: 1px; font-family: "Liberation Mono", "Noto Sans CJK SC", monospace; font-size: 27px; line-height: 36px; }
.command span { font-size: 29px; }
.history { display: flex; flex-direction: column; align-items: flex-start; gap: 8px; margin: 0 0 4px 91px; }
.history p { height: 36px; padding: 0 3px; border-radius: 3px; background: rgba(110, 110, 110, 0.9); white-space: pre; }
.history .old { background: rgba(84, 88, 90, 0.9); color: #a9a9a9; }
.history .mid { background: rgba(94, 96, 97, 0.9); color: #d4d4d4; }
.command-row { display: flex; align-items: flex-end; }
.handle { width: 80px; height: 39px; padding: 0 5px 0 12px; display: flex; align-items: center; gap: 9px; border: 1px solid #8c8c8c; border-radius: 4px 0 0 4px; background: linear-gradient(#7c7c7c, #3e3e3e); }
.handle button { display: flex; }
.handle svg { width: 20px; height: 20px; }
.handle button:last-child { margin-left: auto; }
.handle button:nth-child(2) svg { width: 16px; height: 16px; }
.dots { height: 27px; border-left: 2px dotted #bbb; }
.command-box { flex: 1; min-width: 0; height: 80px; overflow: hidden; padding: 2px 0 0 8px; border-top: 2px solid #777; background: #fff; color: #000; }
.line { display: flex; align-items: center; height: 39px; line-height: 39px; white-space: nowrap; }
.second { display: block; height: 37px; line-height: 37px; padding-left: 14px; }
.ruler { width: 22px; height: 8px; margin-right: 5px; flex: none; }
.line b { margin-left: 11px; }
.ask { margin: 0 20px 0 8px; }
.line .open { width: 12px; margin-right: 2px; font-size: 27px; }
.line button { flex: none; margin-right: 6px; padding: 0 2px; border-radius: 5px; background: #d3d3d1; }
.line em { font-style: normal; color: #00f; }

/* status bar */
.status { height: 71px; display: flex; background: #383838; border-top: 2px solid #606060; }
.layouts { display: flex; align-items: flex-start; padding-left: 17px; }
.layout { width: 76px; height: 25px; margin-right: 6px; line-height: 20px; color: #bbb; background: #555; clip-path: polygon(0 0, 100% 0, 90% 90%, 86% 100%, 14% 100%, 10% 90%); }
.layout.active { width: 72px; margin-right: 2px; color: #fff; font-weight: 700; background: linear-gradient(#555, #888); }
.layout.add { width: 36px; margin-left: 2px; clip-path: none; border-radius: 16px 2px 16px 4px; }
.toggles { width: 831px; margin-left: auto; align-self: flex-end; height: 41px; display: flex; gap: 2px; background: #4c4c4c; border: 1px solid #7c7c7c; }
.cell { display: flex; align-items: center; gap: 10px; padding: 0 7px; border: 1px solid #7c7c7c; border-top-width: 2px; background: #4c4c4c; }
.cell button { display: flex; }
.cell svg { width: 26px; height: 26px; }
.space { width: 45px; padding: 0 2px 0 5px; font-weight: 700; }
.rest { flex: 1; padding-left: 3px; }

/* taskbar */
.taskbar { height: 60px; display: flex; align-items: stretch; background: linear-gradient(90deg, #1c3038, #26353a 45%, #1a2c36); }
.taskbar button { display: flex; align-items: center; justify-content: center; }
.win { width: 72px; }
.win svg { width: 24px; height: 24px; }
.search { width: 516px; display: flex; align-items: center; gap: 16px; padding-left: 17px; background: #f2f2f2; border: 1px solid #bbb; border-bottom-width: 2px; }
.search svg { width: 26px; height: 26px; }
.search input { flex: 1; min-width: 0; font-size: 24px; color: #222; }
.search input::placeholder { color: #2a2a2a; opacity: 1; }
.task { width: 72px; }
.task svg { width: 26px; height: 26px; }
.task.large { width: 76px; }
.task.large svg { width: 36px; height: 36px; }
.running { width: 240px; margin-left: 2px; gap: 4px; background: #4d5a61; border-bottom: 3px solid #76b3e6; font-size: 19px; }
.badge { width: 36px; height: 36px; display: flex; align-items: center; justify-content: center; background: linear-gradient(#fff, #f0a0a0 50%, #e04a4c); }

/* site mark in the corner */
.brand { position: absolute; z-index: 2; right: 0; bottom: 0; width: 542px; height: 271px; background: #fefefe; display: flex; align-items: flex-start; padding: 73px 0 0 46px; }
.brand svg { flex: none; width: 160px; height: 130px; }
.brand-text { display: flex; flex-direction: column; margin-left: -10px; padding-top: 20px; color: #0a0a0a; }
.brand strong { font-size: 60px; line-height: 56px; font-weight: 900; font-style: italic; white-space: nowrap; }
.brand a { font-size: 39px; line-height: 36px; font-weight: 600; font-style: italic; color: inherit; text-decoration: none; }
```
